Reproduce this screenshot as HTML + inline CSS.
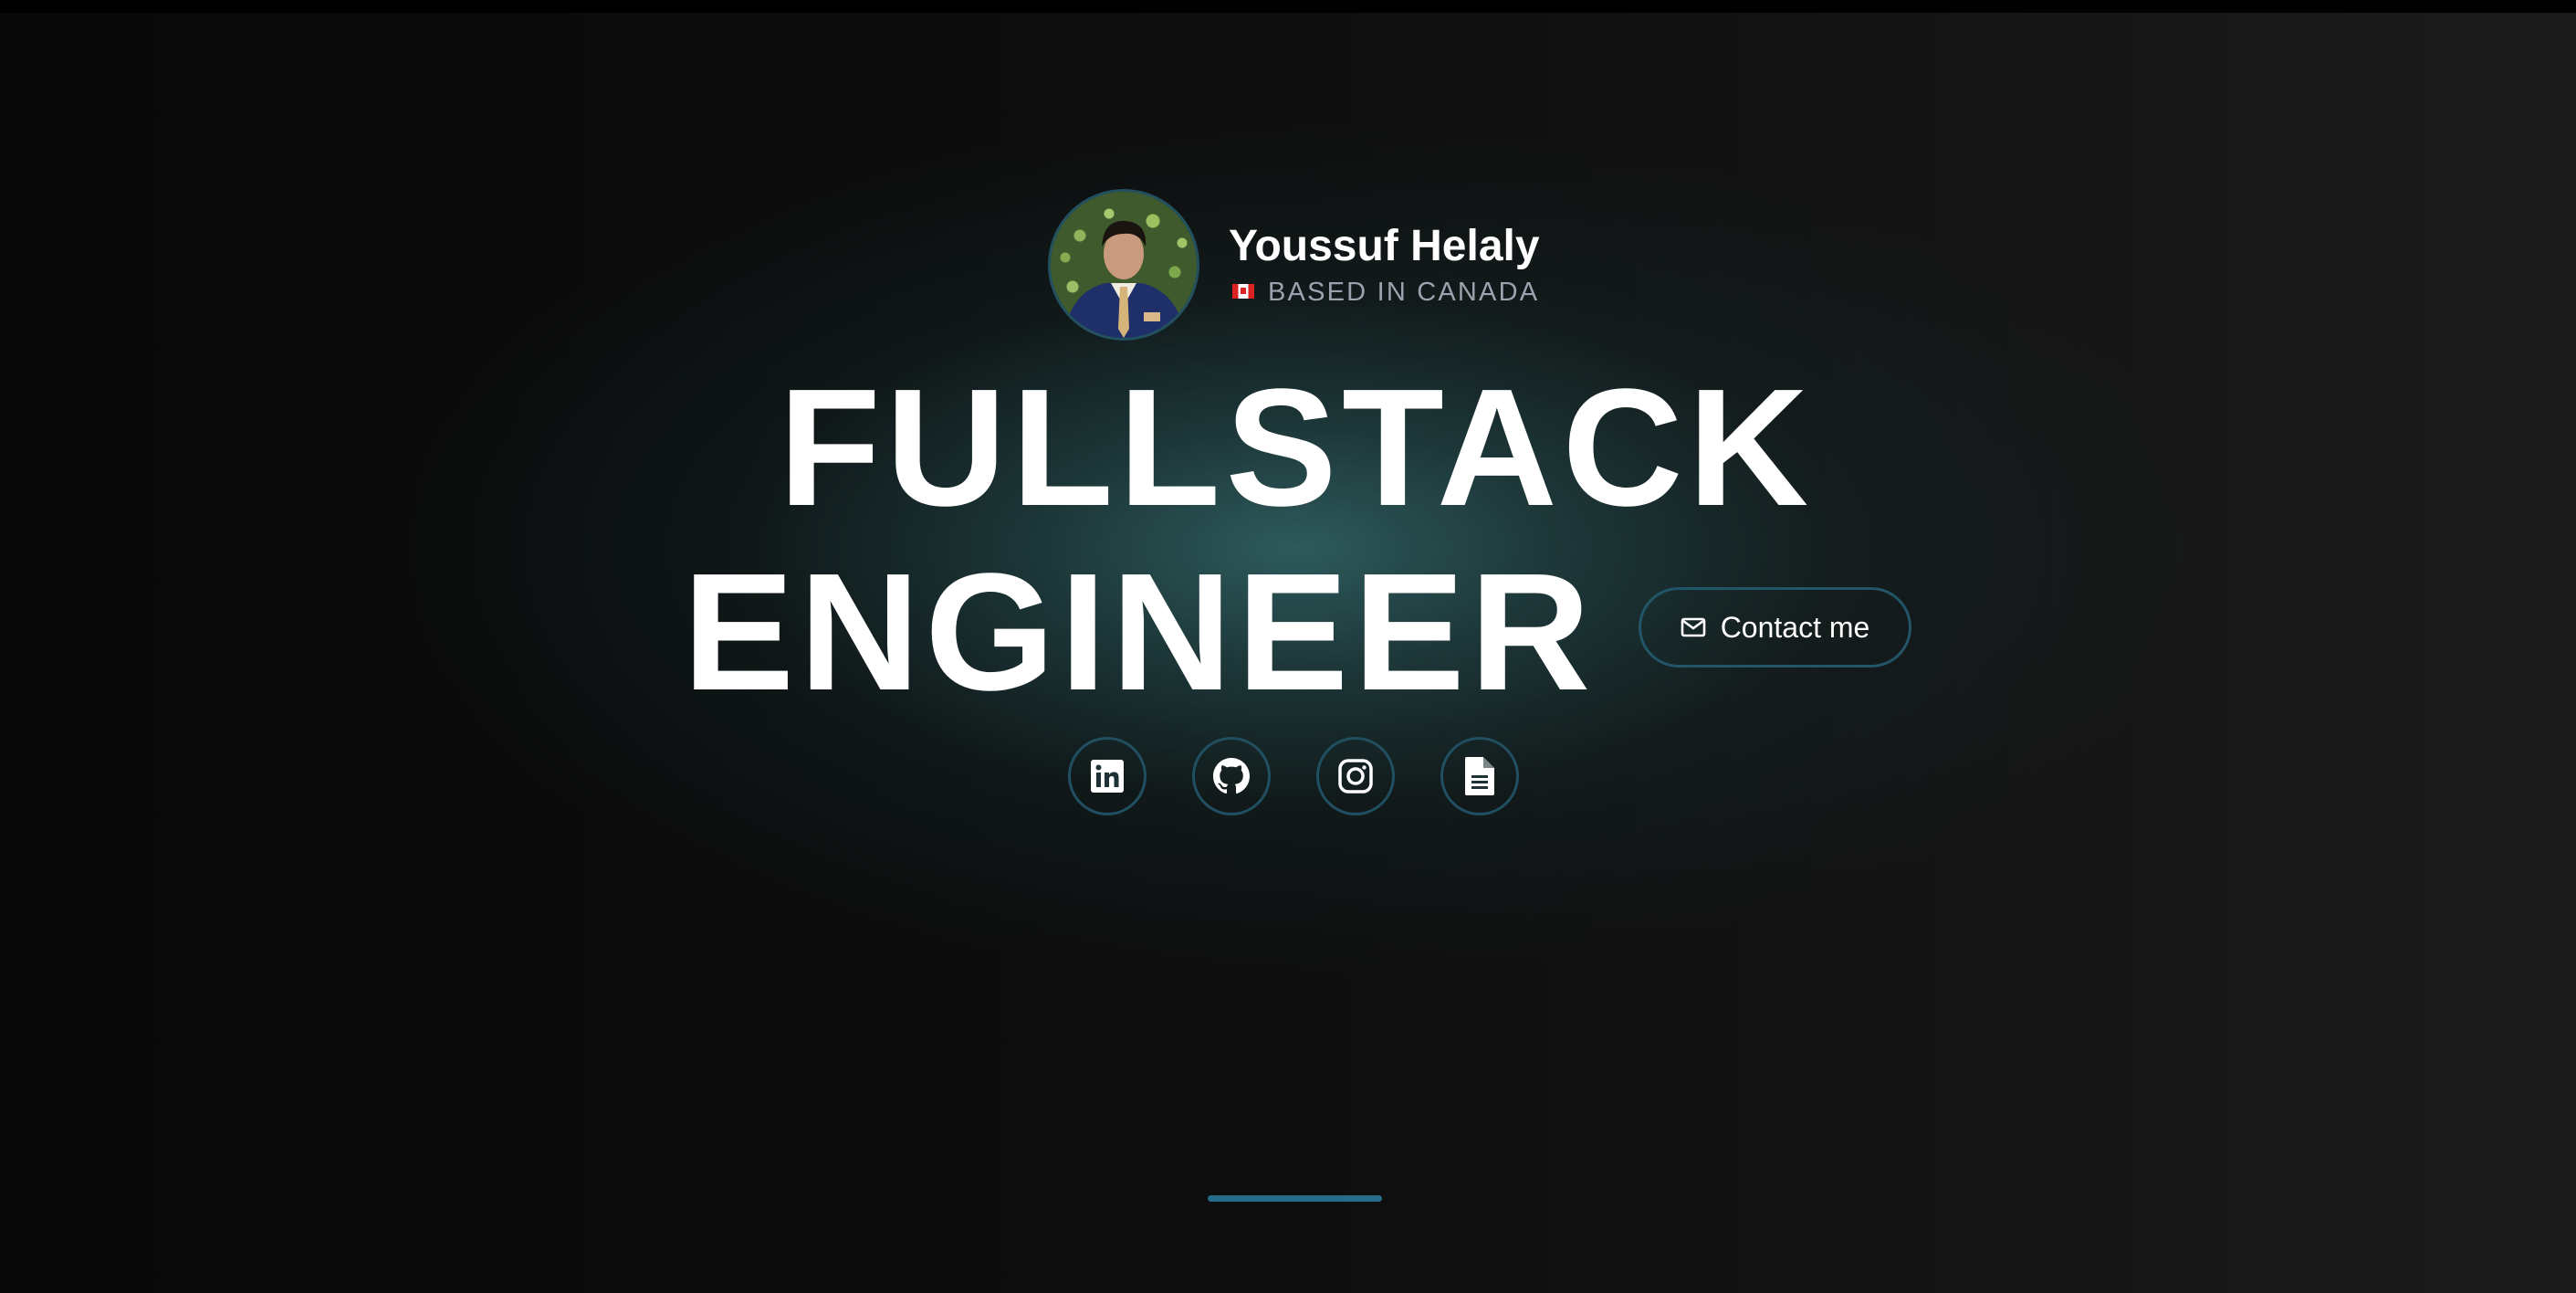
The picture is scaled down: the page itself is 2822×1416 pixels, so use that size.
<!DOCTYPE html>
<html><head><meta charset="utf-8"><style>
html,body{margin:0;padding:0}
body{width:2822px;height:1416px;position:relative;overflow:hidden;font-family:"Liberation Sans",Arial,sans-serif;
background:linear-gradient(90deg,#080808 0%,#0e0e0e 50%,#1b1b1b 100%);}
.topbar{position:absolute;left:0;top:0;width:2822px;height:14px;background:#000}
.glow{position:absolute;left:0;top:0;width:2822px;height:1416px;
background:radial-gradient(ellipse 1000px 470px at 1420px 600px,rgba(47,94,96,0.95) 0%,rgba(33,66,68,0.75) 30%,rgba(20,38,40,0.45) 60%,rgba(12,20,20,0) 100%);}
.abs{position:absolute}
.big{color:#fff;font-weight:700;font-size:183px;line-height:183px;white-space:nowrap;letter-spacing:5.5px}
.circ{position:absolute;width:80px;height:80px;border:3px solid #214f62;border-radius:50%;display:flex;align-items:center;justify-content:center;top:807px}
</style></head><body>
<div class="topbar"></div>
<div class="glow"></div>

<div class="abs" style="left:1148px;top:207px;width:160px;height:160px;border:3px solid #22505f;border-radius:50%;overflow:hidden;
background:radial-gradient(circle at 20% 30%,#8fb25a 0 6px,transparent 7px),radial-gradient(circle at 70% 20%,#9cc060 0 7px,transparent 8px),radial-gradient(circle at 85% 55%,#7ea84c 0 6px,transparent 7px),radial-gradient(circle at 15% 65%,#9bbf66 0 6px,transparent 7px),radial-gradient(circle at 40% 15%,#a8c870 0 5px,transparent 6px),radial-gradient(circle at 90% 35%,#a0c468 0 5px,transparent 6px),radial-gradient(circle at 10% 45%,#86aa52 0 5px,transparent 6px),#3f5a2c;">
<svg width="160" height="160" viewBox="0 0 160 160" style="position:absolute;left:0;top:0">
<path d="M15 160 Q20 110 60 100 L100 100 Q140 110 148 160Z" fill="#1e2f6a"/>
<path d="M66 100 L80 125 L94 100Z" fill="#f1ece0"/>
<path d="M76 104 L84 104 L86 150 L80 160 L74 150Z" fill="#d5b47a"/>
<ellipse cx="80" cy="68" rx="22" ry="28" fill="#c99a7d"/>
<path d="M56 60 Q58 30 82 32 Q106 34 104 60 Q96 44 80 46 Q64 46 56 60Z" fill="#1a1410"/>
<rect x="102" y="132" width="18" height="10" fill="#d9b98a"/>
</svg></div>

<div class="abs" style="left:1346px;top:240px;color:#fff;font-weight:700;font-size:48px;line-height:60px;white-space:nowrap">Youssuf Helaly</div>
<div class="abs" style="left:1350px;top:311px;width:24px;height:16px;background:linear-gradient(90deg,#d22 0 28%,#fff 28% 72%,#d22 72%)"><div style="position:absolute;left:9px;top:4px;width:6px;height:7px;background:#d22"></div></div>
<div class="abs" style="left:1389px;top:303px;color:#9ca3af;font-size:29px;line-height:34px;letter-spacing:2.2px;white-space:nowrap">BASED IN CANADA</div>

<div class="abs big" style="left:853px;top:398px">FULLSTACK</div>
<div class="abs big" style="left:748px;top:600px">ENGINEER</div>

<div class="abs" style="left:1795px;top:643px;width:293px;height:82px;border:3px solid #225567;border-radius:45px;display:flex;align-items:center;justify-content:center;color:#fff;font-size:32px">
<svg width="28" height="22" viewBox="0 0 28 22" style="margin-right:16px"><rect x="2" y="2" width="24" height="18" rx="2" fill="none" stroke="#fff" stroke-width="2.6"/><path d="M3 4 L14 12 L25 4" fill="none" stroke="#fff" stroke-width="2.6"/></svg>Contact me</div>

<div class="circ" style="left:1170px">
<svg width="36" height="36" viewBox="0 0 36 36"><rect x="0" y="0" width="36" height="36" rx="3" fill="#fff"/><rect x="6" y="14" width="5" height="16" fill="#1e3236"/><circle cx="8.5" cy="8.5" r="3" fill="#1e3236"/><path d="M15 14h5v2.5c1-2 3-3 5.5-3 4 0 5 2.5 5 6V30h-5v-9c0-2-1-3-2.5-3s-3 1-3 3v9h-5Z" fill="#1e3236"/></svg></div>
<div class="circ" style="left:1306px">
<svg width="40" height="40" viewBox="0 0 16 16"><path fill="#fff" d="M8 0C3.58 0 0 3.580 0 8c0 3.54 2.29 6.53 5.47 7.59.4.07.55-.17.55-.38 0-.19-.01-.82-.01-1.49-2.01.37-2.53-.49-2.69-.94-.09-.23-.48-.94-.82-1.130-.28-.15-.68-.52-.01-.53.63-.01 1.08.58 1.23.82.72 1.21 1.87.87 2.33.66.07-.52.28-.87.51-1.07-1.78-.2-3.64-.89-3.64-3.95 0-.87.31-1.59.82-2.15-.08-.2-.36-1.02.08-2.12 0 0 .67-.21 2.2.82.64-.18 1.32-.27 2-.27.68 0 1.360.09 2 .27 1.53-1.04 2.2-.82 2.2-.82.44 1.1.16 1.92.08 2.12.51.56.82 1.27.82 2.15 0 3.07-1.87 3.75-3.65 3.95.29.25.54.73.54 1.48 0 1.07-.01 1.93-.01 2.2 0 .21.15.46.55.38A8.013 8.013 0 0016 8c0-4.42-3.58-8-8-8z"/></svg></div>
<div class="circ" style="left:1442px">
<svg width="38" height="38" viewBox="0 0 38 38"><rect x="2" y="2" width="34" height="34" rx="9" fill="none" stroke="#fff" stroke-width="3.5"/><circle cx="19" cy="19" r="8" fill="none" stroke="#fff" stroke-width="3.5"/><circle cx="28.5" cy="9.5" r="2.2" fill="#fff"/></svg></div>
<div class="circ" style="left:1578px">
<svg width="32" height="42" viewBox="0 0 32 42"><path d="M2 0H20L32 12V40a2 2 0 0 1-2 2H2a2 2 0 0 1-2-2V2a2 2 0 0 1 2-2Z" fill="#fff"/><path d="M20 0V12H32" fill="#1e3236" opacity=".6"/><rect x="7" y="20" width="18" height="3" fill="#1e3236"/><rect x="7" y="26" width="18" height="3" fill="#1e3236"/><rect x="7" y="32" width="18" height="3" fill="#1e3236"/></svg></div>

<div class="abs" style="left:1323px;top:1309px;width:191px;height:7px;border-radius:4px;background:#256c8a"></div>
</body></html>
